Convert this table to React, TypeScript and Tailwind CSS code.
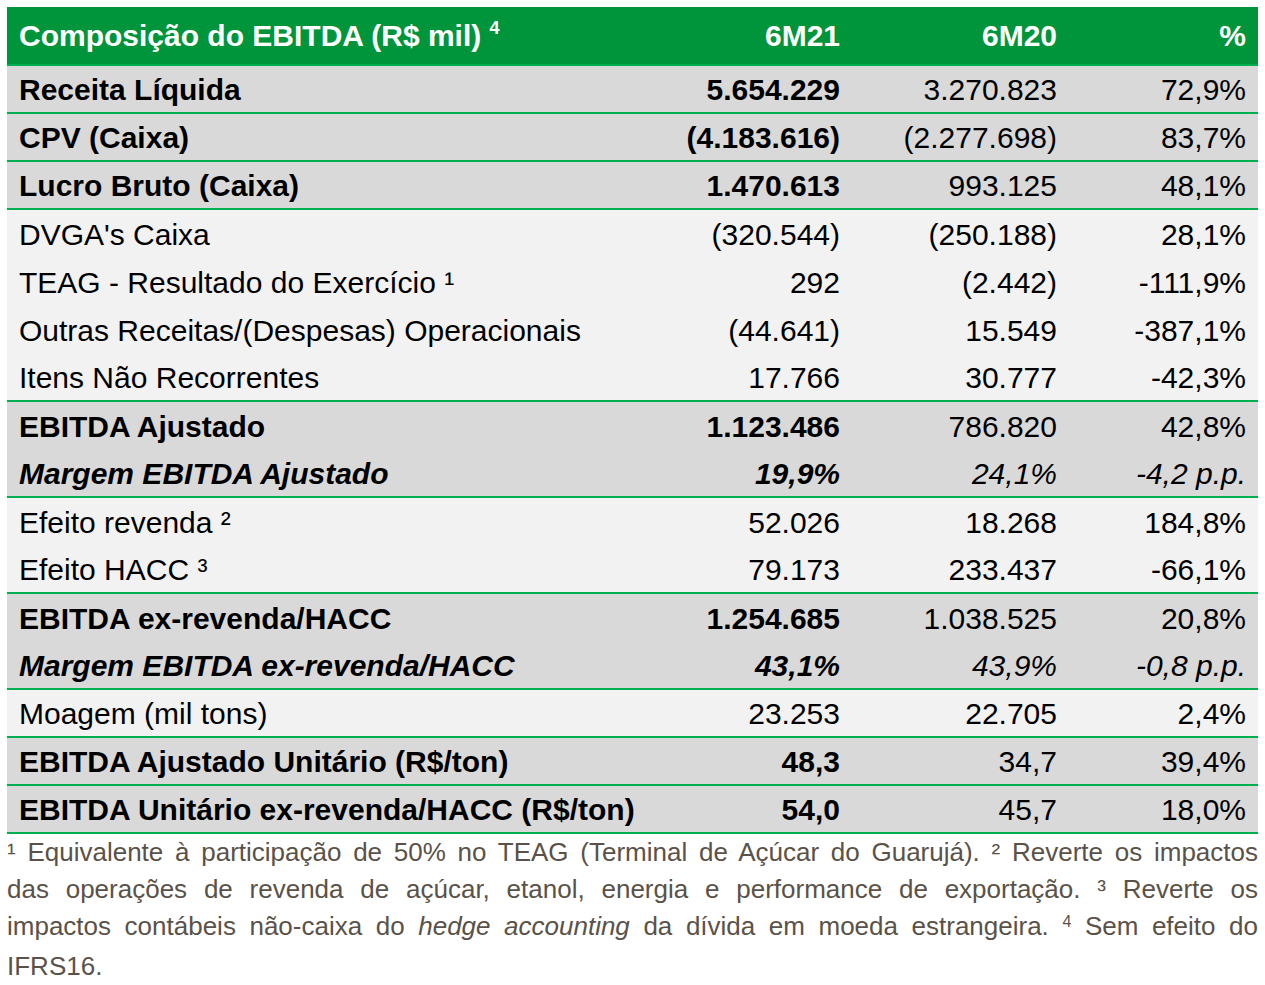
import React from "react";

type Row = {
  label: string;
  a: string;
  b: string;
  c: string;
  kind: "bold" | "italic" | "plain";
  bg: "gray" | "light";
  line?: boolean;
};

const rows: Row[] = [
  { label: "Receita Líquida", a: "5.654.229", b: "3.270.823", c: "72,9%", kind: "bold", bg: "gray", line: true },
  { label: "CPV (Caixa)", a: "(4.183.616)", b: "(2.277.698)", c: "83,7%", kind: "bold", bg: "gray", line: true },
  { label: "Lucro Bruto (Caixa)", a: "1.470.613", b: "993.125", c: "48,1%", kind: "bold", bg: "gray", line: true },
  { label: "DVGA's Caixa", a: "(320.544)", b: "(250.188)", c: "28,1%", kind: "plain", bg: "light" },
  { label: "TEAG - Resultado do Exercício ¹", a: "292", b: "(2.442)", c: "-111,9%", kind: "plain", bg: "light" },
  { label: "Outras Receitas/(Despesas) Operacionais", a: "(44.641)", b: "15.549", c: "-387,1%", kind: "plain", bg: "light" },
  { label: "Itens Não Recorrentes", a: "17.766", b: "30.777", c: "-42,3%", kind: "plain", bg: "light", line: true },
  { label: "EBITDA Ajustado", a: "1.123.486", b: "786.820", c: "42,8%", kind: "bold", bg: "gray" },
  { label: "Margem EBITDA Ajustado", a: "19,9%", b: "24,1%", c: "-4,2 p.p.", kind: "italic", bg: "gray", line: true },
  { label: "Efeito revenda ²", a: "52.026", b: "18.268", c: "184,8%", kind: "plain", bg: "light" },
  { label: "Efeito HACC ³", a: "79.173", b: "233.437", c: "-66,1%", kind: "plain", bg: "light", line: true },
  { label: "EBITDA ex-revenda/HACC", a: "1.254.685", b: "1.038.525", c: "20,8%", kind: "bold", bg: "gray" },
  { label: "Margem EBITDA ex-revenda/HACC", a: "43,1%", b: "43,9%", c: "-0,8 p.p.", kind: "italic", bg: "gray", line: true },
  { label: "Moagem (mil tons)", a: "23.253", b: "22.705", c: "2,4%", kind: "plain", bg: "light", line: true },
  { label: "EBITDA Ajustado Unitário (R$/ton)", a: "48,3", b: "34,7", c: "39,4%", kind: "bold", bg: "gray", line: true },
  { label: "EBITDA Unitário ex-revenda/HACC (R$/ton)", a: "54,0", b: "45,7", c: "18,0%", kind: "bold", bg: "gray", line: true },
];

const cols = "grid grid-cols-[623px_222px_217px_189px]";
const justLine = "text-justify [text-align-last:justify] whitespace-nowrap";

const App = () => {
  return (
    <div className="w-[1265px] min-h-[985px] bg-white px-[7px] pt-[7px] font-['Liberation_Sans',Arial,sans-serif]">
      <div className="w-[1251px] flex flex-col">
        <div className={`${cols} h-[59px] items-center bg-[#00953b] border-b-2 border-[#00b050] text-white font-bold text-[30px]`}>
          <div className="pl-3">
            Composição do EBITDA (R$ mil) <span className="relative -top-3 text-[18px]">4</span>
          </div>
          <div className="text-right pr-3">6M21</div>
          <div className="text-right pr-3">6M20</div>
          <div className="text-right pr-3">%</div>
        </div>
        {rows.map((r, i) => (
          <div
            key={i}
            className={`${cols} h-[48px] items-center pt-px text-[30px] text-black ${r.bg === "gray" ? "bg-[#d9d9d9]" : "bg-[#f2f2f2]"} ${r.line ? "border-b-2 border-[#00b050]" : ""} ${r.kind === "italic" ? "italic" : ""}`}
          >
            <div className={`pl-3 whitespace-nowrap ${r.kind !== "plain" ? "font-bold" : ""}`}>{r.label}</div>
            <div className={`pr-3 text-right ${r.kind !== "plain" ? "font-bold" : ""}`}>{r.a}</div>
            <div className="pr-3 text-right">{r.b}</div>
            <div className="pr-3 text-right">{r.c}</div>
          </div>
        ))}
        <div className="text-[26px] leading-[37px] text-[#5a5248]">
          <div className={justLine}>
            ¹ Equivalente à participação de 50% no TEAG (Terminal de Açúcar do Guarujá). ² Reverte os impactos
          </div>
          <div className={justLine}>
            das operações de revenda de açúcar, etanol, energia e performance de exportação. ³ Reverte os
          </div>
          <div className={justLine}>
            impactos contábeis não-caixa do <i>hedge accounting</i> da dívida em moeda estrangeira.{" "}
            <span className="relative -top-2 text-[16px]">4</span>
            {" "}Sem efeito do
          </div>
          <div>IFRS16.</div>
        </div>
      </div>
    </div>
  );
};

export default App;
